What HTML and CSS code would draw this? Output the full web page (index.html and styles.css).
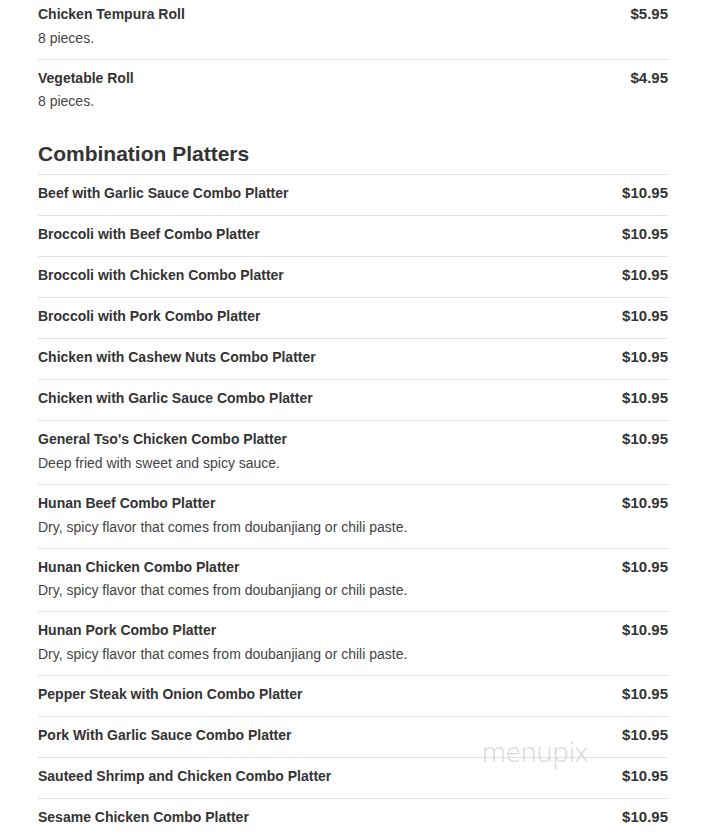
FILE: index.html
```html
<!DOCTYPE html>
<html lang="en">
<head>
<meta charset="utf-8">
<title>Menu</title>
<link rel="stylesheet" href="styles.css">
</head>
<body>
<div class="page">
  <section class="section first">
    <div class="item">
      <div class="info"><div class="name">Chicken Tempura Roll</div><div class="desc">8 pieces.</div></div>
      <div class="price">$5.95</div>
    </div>
    <div class="item">
      <div class="info"><div class="name">Vegetable Roll</div><div class="desc">8 pieces.</div></div>
      <div class="price">$4.95</div>
    </div>
  </section>
  <section class="section">
    <h2 class="section-title">Combination Platters</h2>
    <div class="item"><div class="info"><div class="name">Beef with Garlic Sauce Combo Platter</div></div><div class="price">$10.95</div></div>
    <div class="item"><div class="info"><div class="name">Broccoli with Beef Combo Platter</div></div><div class="price">$10.95</div></div>
    <div class="item"><div class="info"><div class="name">Broccoli with Chicken Combo Platter</div></div><div class="price">$10.95</div></div>
    <div class="item"><div class="info"><div class="name">Broccoli with Pork Combo Platter</div></div><div class="price">$10.95</div></div>
    <div class="item"><div class="info"><div class="name">Chicken with Cashew Nuts Combo Platter</div></div><div class="price">$10.95</div></div>
    <div class="item"><div class="info"><div class="name">Chicken with Garlic Sauce Combo Platter</div></div><div class="price">$10.95</div></div>
    <div class="item"><div class="info"><div class="name">General Tso's Chicken Combo Platter</div><div class="desc">Deep fried with sweet and spicy sauce.</div></div><div class="price">$10.95</div></div>
    <div class="item"><div class="info"><div class="name">Hunan Beef Combo Platter</div><div class="desc">Dry, spicy flavor that comes from doubanjiang or chili paste.</div></div><div class="price">$10.95</div></div>
    <div class="item"><div class="info"><div class="name">Hunan Chicken Combo Platter</div><div class="desc">Dry, spicy flavor that comes from doubanjiang or chili paste.</div></div><div class="price">$10.95</div></div>
    <div class="item"><div class="info"><div class="name">Hunan Pork Combo Platter</div><div class="desc">Dry, spicy flavor that comes from doubanjiang or chili paste.</div></div><div class="price">$10.95</div></div>
    <div class="item"><div class="info"><div class="name">Pepper Steak with Onion Combo Platter</div></div><div class="price">$10.95</div></div>
    <div class="item"><div class="info"><div class="name">Pork With Garlic Sauce Combo Platter</div></div><div class="price">$10.95</div></div>
    <div class="item"><div class="info"><div class="name">Sauteed Shrimp and Chicken Combo Platter</div></div><div class="price">$10.95</div></div>
    <div class="item"><div class="info"><div class="name">Sesame Chicken Combo Platter</div></div><div class="price">$10.95</div></div>
  </section>
  <div class="watermark">menupix</div>
</div>
</body>
</html>
```
FILE: styles.css
```css
html, body {
  margin: 0;
  padding: 0;
  background: #fff;
}
body {
  font-family: "Liberation Sans", Arial, sans-serif;
  color: #333;
  overflow: hidden;
}
.page {
  position: relative;
  width: 630px;
  margin: -5px 0 0 38px;
}
.section-title {
  margin: 21px 0 9px;
  font-size: 21px;
  line-height: 22px;
  font-weight: bold;
  color: #333;
}
.item {
  display: flex;
  justify-content: space-between;
  align-items: flex-start;
  border-top: 1px solid #e2e2e2;
  padding: 8px 0 12px;
}
.name {
  font-size: 14px;
  line-height: 20px;
  font-weight: bold;
}
.desc {
  margin: 3.67px 0 -1px;
  font-size: 14px;
  line-height: 20px;
  color: #444;
}
.price {
  font-size: 15px;
  line-height: 20px;
  font-weight: bold;
}
.watermark {
  position: absolute;
  left: 444px;
  top: 738px;
  font-family: "Open Sans", sans-serif;
  font-weight: 300;
  font-size: 27px;
  color: #d9d9d9;
}
```
